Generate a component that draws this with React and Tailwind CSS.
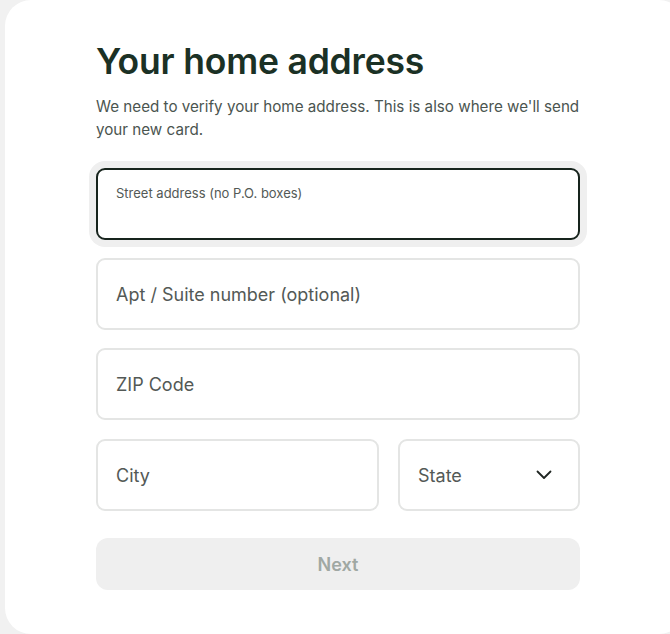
import React from "react";

function Field({ label, className = "" }) {
  return (
    <div
      className={`h-[72px] rounded-[9px] border-2 border-[#e4e5e4] bg-white flex items-center px-[18px] text-[18px] text-[#535956] ${className}`}
    >
      {label}
    </div>
  );
}

export default function App() {
  return (
    <div
      className="w-[670px] h-[634px] bg-[#f1f1f1] pl-[5px] overflow-hidden"
      style={{ fontFamily: "Inter, 'Noto Sans', sans-serif" }}
    >
      <div className="h-[634px] w-[680px] bg-white rounded-[26px] pl-[91px] pt-[42px]">
        <div className="w-[484px] flex flex-col">
          <h1 className="text-[35.5px] leading-[40px] font-semibold text-[#1b3125] tracking-[-0.2px]">
            Your home address
          </h1>
          <p className="mt-[13px] text-[15.2px] leading-[23px] text-[#4b5550]">
            We need to verify your home address. This is also where we'll send your new card.
          </p>

          <div className="mt-[27px] h-[72px] rounded-[9px] border-2 border-[#17241d] bg-white ring-[7px] ring-[#efefef] px-[18px] pt-[15px]">
            <div className="text-[13px] leading-[16px] text-[#535956]">
              Street address (no P.O. boxes)
            </div>
          </div>

          <Field label="Apt / Suite number (optional)" className="mt-[18px]" />
          <Field label="ZIP Code" className="mt-[18px]" />

          <div className="mt-[19px] flex gap-[19px]">
            <Field label="City" className="flex-1" />
            <div className="w-[182px] h-[72px] rounded-[9px] border-2 border-[#e4e5e4] bg-white flex items-center justify-between pl-[18px] pr-[26px] text-[18px] text-[#535956]">
              <span>State</span>
              <svg width="16" height="10" viewBox="0 0 16 10" fill="none">
                <polyline
                  points="1.5,1.5 8,8 14.5,1.5"
                  stroke="#1f2622"
                  strokeWidth="1.8"
                  strokeLinecap="round"
                  strokeLinejoin="round"
                />
              </svg>
            </div>
          </div>

          <button className="mt-[27px] h-[52px] rounded-[12px] bg-[#efefef] text-[18px] font-semibold text-[#a0a8a3]">
            Next
          </button>
        </div>
      </div>
    </div>
  );
}
